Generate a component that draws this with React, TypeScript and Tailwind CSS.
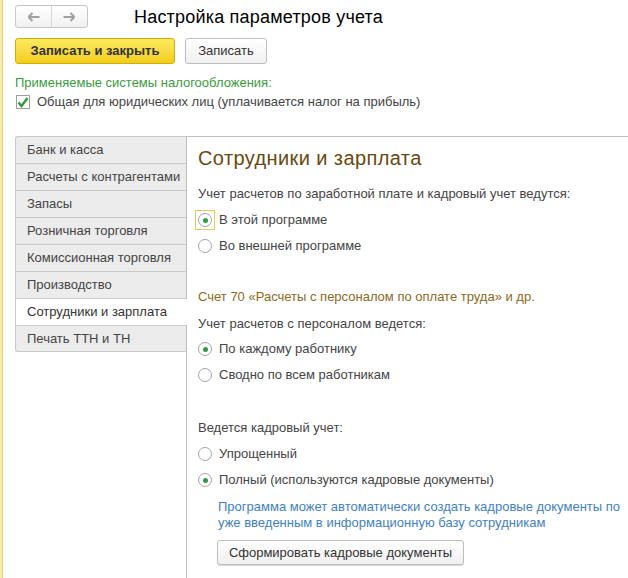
import { ReactNode } from "react";

const tabs = [
  "Банк и касса",
  "Расчеты с контрагентами",
  "Запасы",
  "Розничная торговля",
  "Комиссионная торговля",
  "Производство",
  "Сотрудники и зарплата",
  "Печать ТТН и ТН",
];

const Radio = ({ checked, focused, children }: { checked?: boolean; focused?: boolean; children: ReactNode }) => (
  <div className="flex h-[26px] items-center">
    <span className="relative flex h-[14px] w-[14px] items-center justify-center rounded-full border border-[#a3a3a3] bg-white">
      {focused && <span className="absolute -inset-[4px] border border-[#e9c95a]" />}
      {checked && <span className="h-[5px] w-[5px] rounded-full bg-[#2f9a4c]" />}
    </span>
    <span className="ml-[7px]">{children}</span>
  </div>
);

export default function App() {
  return (
    <div
      className="flex h-[578px] w-[628px] overflow-hidden bg-white text-[13px] leading-[16px] text-[#444]"
      style={{ fontFamily: '"Liberation Sans", Arial, sans-serif' }}
    >
      <div className="w-[3px] shrink-0 border-r border-[#e2cf78] bg-[#fbeea8]" />
      <div className="flex min-w-0 flex-1 flex-col pl-[12px]">
        {/* header */}
        <div className="mt-[5px] flex h-[23px] items-center">
          <div className="flex h-[23px] w-[73px] rounded-[3px] border border-[#c6c6c6] bg-gradient-to-b from-white to-[#f1f1f1]">
            <div className="flex flex-1 items-center justify-center border-r border-[#d6d6d6]">
              <svg width="13" height="10" viewBox="0 0 13 10">
                <path d="M1.5 5h11M1.5 5l4-4M1.5 5l4 4" stroke="#a0a0a0" strokeWidth="2" fill="none" />
              </svg>
            </div>
            <div className="flex flex-1 items-center justify-center">
              <svg width="13" height="10" viewBox="0 0 13 10">
                <path d="M0.5 5h11M11.5 5l-4-4M11.5 5l-4 4" stroke="#a0a0a0" strokeWidth="2" fill="none" />
              </svg>
            </div>
          </div>
          <div className="ml-[46px] text-[18px] leading-[22px] tracking-[0.2px] text-black">Настройка параметров учета</div>
        </div>

        {/* actions */}
        <div className="mt-[10px] flex h-[26px] items-stretch">
          <button className="w-[160px] rounded-[3px] border border-[#d2ae08] bg-gradient-to-b from-[#fde95e] to-[#f2cd14] text-[13px] font-bold text-[#333]">
            Записать и закрыть
          </button>
          <button className="ml-[10px] w-[82px] rounded-[3px] border border-[#bdbdbd] bg-gradient-to-b from-white to-[#f0f0f0] text-[13px] text-[#333]">
            Записать
          </button>
        </div>

        <div className="mt-[11px] text-[#3d9b3d]">Применяемые системы налогообложения:</div>
        <div className="mt-[3px] flex h-[16px] items-center">
          <span className="ml-px flex h-[14px] w-[14px] items-center justify-center border border-[#9d9d9d] bg-white">
            <svg width="12" height="11" viewBox="0 0 12 11">
              <path d="M1.5 5.5l3 3.5L10.5 1" stroke="#2f9a3a" strokeWidth="2.4" fill="none" />
            </svg>
          </span>
          <span className="ml-[7px]">Общая для юридических лиц (уплачивается налог на прибыль)</span>
        </div>

        {/* tabs + panel */}
        <div className="mt-[26px] flex flex-1">
          <div className="flex w-[171px] shrink-0 flex-col">
            {tabs.map((t, i) => {
              const active = i === 6;
              return (
                <div
                  key={t}
                  className={`relative flex h-[27px] items-center border-l border-t border-[#c9c9c9] pl-[11px] ${
                    active ? "z-10 -mr-px bg-white text-[#333]" : "bg-[#ececec]"
                  } ${i === 0 ? "rounded-tl-[3px]" : ""} ${
                    i === tabs.length - 1 ? "rounded-bl-[3px] border-b" : ""
                  }`}
                >
                  {t}
                </div>
              );
            })}
          </div>

          <div className="flex min-w-0 flex-1 flex-col border-l border-t border-[#bdbdbd] pl-[11px]">
            <div className="mt-[9px] text-[20px] leading-[24px] tracking-[0.4px] text-[#674a10]">Сотрудники и зарплата</div>
            <div className="mt-[16px]">Учет расчетов по заработной плате и кадровый учет ведутся:</div>
            <div className="mt-[5px]">
              <Radio checked focused>
                В этой программе
              </Radio>
              <Radio>Во внешней программе</Radio>
            </div>

            <div className="mt-[30px] text-[#8a6a1c]">Счет 70 «Расчеты с персоналом по оплате труда» и др.</div>
            <div className="mt-[11px]">Учет расчетов с персоналом ведется:</div>
            <div className="mt-[4px]">
              <Radio checked>По каждому работнику</Radio>
              <Radio>Сводно по всем работникам</Radio>
            </div>

            <div className="mt-[32px]">Ведется кадровый учет:</div>
            <div className="mt-[5px]">
              <Radio>Упрощенный</Radio>
              <Radio checked>Полный (используются кадровые документы)</Radio>
            </div>
            <div className="ml-[20px] mt-[6px] text-[#4281c0]">
              Программа может автоматически создать кадровые документы по
              <br />
              уже введенным в информационную базу сотрудникам
            </div>
            <div className="ml-[19px] mt-[9px]">
              <button className="h-[25px] w-[247px] rounded-[3px] border border-[#bdbdbd] bg-gradient-to-b from-white to-[#f0f0f0] text-[13px] text-[#333] shadow-[0_1px_0_#d8d8d8]">
                Сформировать кадровые документы
              </button>
            </div>
          </div>
        </div>
      </div>
    </div>
  );
}
